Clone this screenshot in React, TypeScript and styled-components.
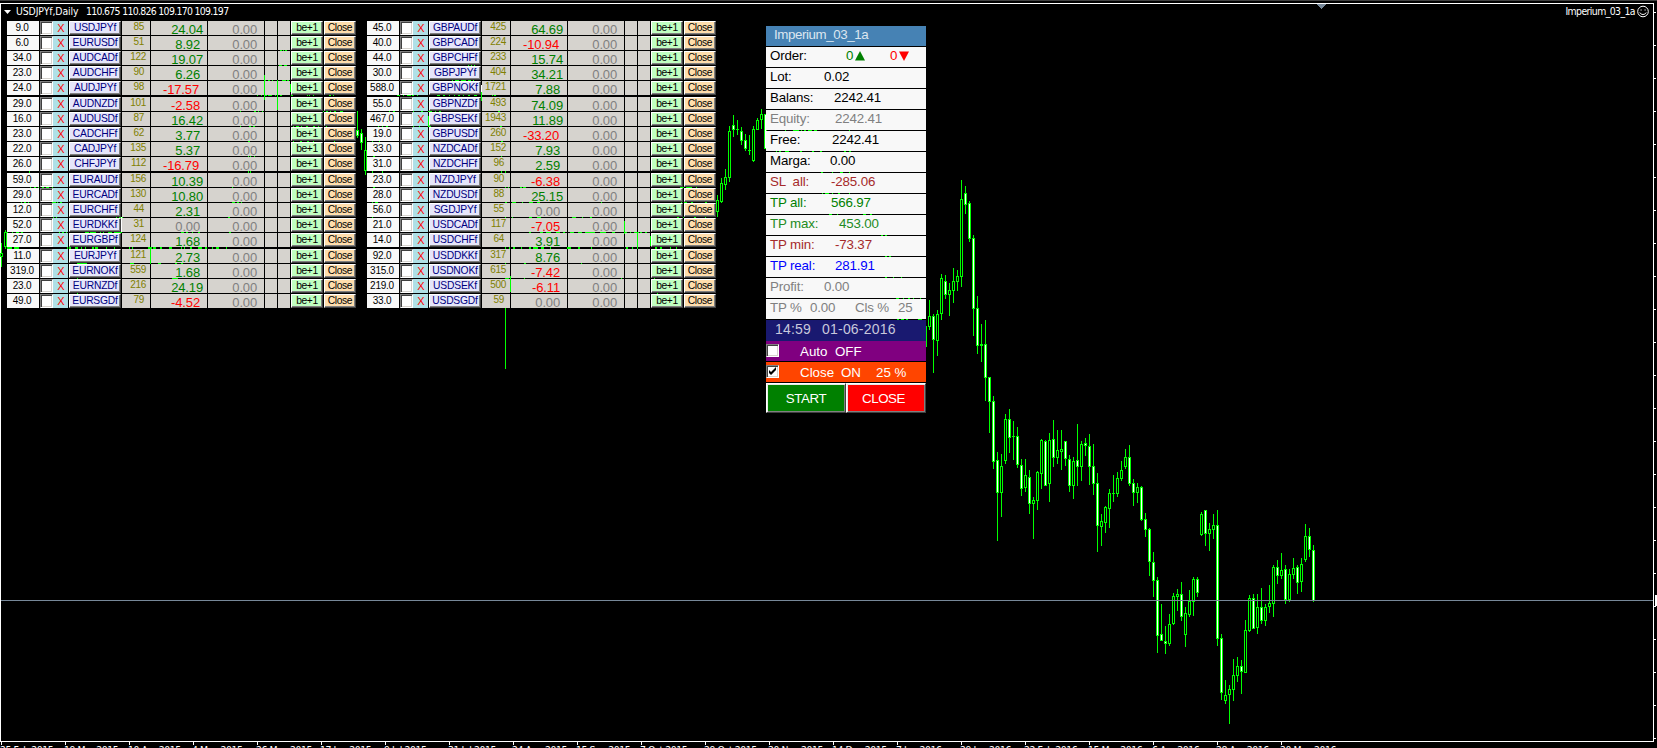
import React from "react";
import styled, { createGlobalStyle } from "styled-components";

const GlobalStyle = createGlobalStyle`
  html, body { margin: 0; padding: 0; background: #000; }
  body { overflow: hidden; }
`;

const LIME = "#00ff00";
const GRID = "#d6d3ce";

const Stage = styled.div`
  display: grid;
  width: 1657px;
  height: 748px;
  overflow: hidden;
  background: #000;
  font-family: "Liberation Sans", Arial, sans-serif;
  & > * { grid-area: 1 / 1; }
`;

const ChartSvg = styled.svg`
  display: block;
`;

const Overlay = styled.div`
  display: flex;
  flex-direction: column;
  min-width: 0;
`;

const Header = styled.header`
  box-sizing: border-box;
  display: flex;
  justify-content: space-between;
  height: 21px;
  padding: 3px 6px 2px 4px;
  color: #fff;
  font: condensed 10.4px/16px "DejaVu Sans", sans-serif;
  white-space: pre;
`;

const HeaderSide = styled.div`
  display: flex;
  align-items: center;
`;

const HeaderText = styled.span<{ $spacing: number; $width?: number }>`
  width: ${(p) => (p.$width ? `${p.$width}px` : "auto")};
  letter-spacing: ${(p) => p.$spacing}px;
`;

const Body = styled.main`
  display: flex;
  align-items: flex-start;
  height: 721px;
  padding-left: 7px;
`;

const PairTable = styled.div`
  width: 349px;
  margin-right: 11px;
`;

const PairRow = styled.div<{ $wide: boolean }>`
  display: grid;
  grid-template-columns: 32px 13px 14px 52px 28px 56px 56px 12px 12px 32px 32px;
  grid-template-rows: 14px;
  column-gap: 1px;
  height: 14px;
  margin-bottom: ${(p) => (p.$wide ? 2 : 1)}px;
  white-space: pre;
`;

const SpreadCell = styled.div`
  background: #f8f8f8;
  color: #000;
  font-size: 10px;
  line-height: 13px;
  letter-spacing: -0.25px;
  padding-right: 2px;
  text-align: center;
`;

const Check = styled.div`
  box-sizing: border-box;
  height: 14px;
  width: 13px;
  background: #fff;
  border: 1px solid;
  border-color: #808080 #fff #fff #808080;
  box-shadow: inset 1px 1px #404040, inset -1px -1px ${GRID};
  svg { display: block; }
`;

const RemoveCell = styled.div`
  background: #b0e0e6;
  margin-left: -1px;
  color: #ff0000;
  font-size: 11px;
  line-height: 15px;
  padding-left: 1px;
  text-align: center;
`;

const BevelButton = styled.button<{ $bg: string; $fg: string; $spacing?: number }>`
  appearance: none;
  box-sizing: border-box;
  display: block;
  width: 100%;
  height: 14px;
  margin: 0;
  padding: 0;
  border: 1px solid;
  border-color: #fff #404040 #404040 #fff;
  border-radius: 0;
  box-shadow: inset -1px -1px #808080;
  background: ${(p) => p.$bg};
  color: ${(p) => p.$fg};
  font: 10.3px/12px "Liberation Sans", Arial, sans-serif;
  letter-spacing: ${(p) => p.$spacing ?? -0.4}px;
  text-align: center;
  white-space: pre;
`;

const CountCell = styled.div<{ $right: number }>`
  background: ${GRID};
  color: #808000;
  font-size: 10px;
  line-height: 12px;
  letter-spacing: -0.3px;
  padding-right: ${(p) => p.$right}px;
  text-align: right;
`;

const ValueCell = styled.div<{ $color: string; $right: number }>`
  background: ${GRID};
  color: ${(p) => p.$color};
  padding-right: ${(p) => p.$right}px;
  font-size: 13px;
  line-height: 17px;
  letter-spacing: -0.15px;
  text-align: right;
`;

const BlankCell = styled.div`
  background: ${GRID};
`;

const Panel = styled.aside`
  width: 160px;
  margin: 5px 0 0 39px;
  font-size: 13.33px;
  white-space: pre;
`;

const PanelTitle = styled.div`
  height: 20px;
  margin-bottom: 1px;
  padding-left: 8px;
  background: #4682b4;
  color: #dce6f0;
  line-height: 18px;
  letter-spacing: -0.42px;
`;

const PanelRow = styled.div<{ $color: string }>`
  display: flex;
  height: 20px;
  margin-bottom: 1px;
  padding-left: 4px;
  background: #f8f8f8;
  color: ${(p) => p.$color};
  line-height: 18px;
  letter-spacing: -0.15px;
`;

const RowLabel = styled.span<{ $width: number }>`
  width: ${(p) => p.$width}px;
`;

const OrderCount = styled.span<{ $color: string; $width: number }>`
  display: flex;
  align-items: center;
  gap: 2px;
  height: 18px;
  width: ${(p) => p.$width}px;
  color: ${(p) => p.$color};
`;

const Clock = styled.div`
  display: flex;
  gap: 11px;
  height: 21px;
  padding-left: 9px;
  background: #191970;
  color: #c8c8dc;
  font-size: 14px;
  line-height: 19px;
  letter-spacing: 0.2px;
`;

const Toggle = styled.div<{ $bg: string }>`
  display: flex;
  height: 20px;
  margin-bottom: 1px;
  background: ${(p) => p.$bg};
  color: #fff;
  line-height: 21px;
  ${Check} { margin: 3px 21px 0 0; height: 13px; }
`;

const Actions = styled.div`
  display: grid;
  grid-template-columns: 80px 80px;
  ${BevelButton} {
    height: 30px;
    padding-top: 1px;
    font-size: 13.33px;
    line-height: 27px;
    box-shadow: inset 1px 1px #e8e8e8, inset -1px -1px #808080;
  }
  ${BevelButton}:last-child {
    padding-right: 5px;
  }
`;

const DateAxis = styled.footer`
  display: grid;
  grid-template-columns: repeat(21, 64px);
  height: 6px;
  color: #fff;
  font: condensed 10.4px/13px "DejaVu Sans", sans-serif;
  letter-spacing: -0.45px;
  white-space: pre;
  span { padding-top: 2px; }
`;

// [high, body top, body bottom, low, kind]: u = rising (hollow), d = falling (white)
type Candle = [number, number, number, number, "u" | "d"];

const segments: { start: number; candles: Candle[] }[] = [
  { start: 1, candles: [[243, 253, 257, 267, "u"], [230, 232, 247, 249, "u"]] },
  {
    start: 357,
    candles: [[111, 130, 136, 138, "d"], [129, 133, 143, 150, "d"], [137, 150, 171, 175, "u"]],
  },
  { start: 505, candles: [[308, 308, 308, 369, "u"]] },
  {
    start: 717,
    candles: [
      [195, 200, 212, 217, "u"], [178, 183, 202, 203, "u"], [169, 177, 185, 190, "u"],
      [126, 131, 178, 182, "u"], [115, 125, 130, 137, "d"], [120, 129, 130, 135, "u"],
      [127, 131, 141, 145, "d"], [134, 140, 149, 151, "d"], [135, 150, 151, 155, "u"],
      [126, 129, 161, 162, "u"], [118, 120, 130, 130, "u"], [109, 114, 120, 129, "u"],
      [114, 114, 149, 149, "d"],
    ],
  },
  {
    start: 925,
    candles: [
      [326, 326, 347, 347, "d"], [300, 316, 327, 330, "u"], [314, 316, 340, 373, "d"],
      [310, 314, 341, 356, "u"], [274, 278, 314, 320, "u"], [275, 281, 295, 299, "d"],
      [283, 290, 295, 316, "u"], [268, 281, 291, 303, "u"], [270, 276, 282, 291, "u"],
      [180, 199, 277, 287, "u"], [186, 193, 205, 214, "d"], [201, 203, 239, 242, "d"],
      [235, 238, 309, 336, "d"], [296, 308, 346, 354, "d"], [324, 344, 346, 362, "u"],
      [320, 344, 378, 401, "d"], [377, 377, 402, 433, "d"], [396, 401, 462, 469, "d"],
      [452, 460, 493, 541, "d"], [454, 466, 493, 517, "u"], [414, 419, 461, 464, "u"],
      [409, 419, 438, 453, "d"], [421, 436, 437, 460, "u"], [427, 436, 465, 468, "d"],
      [459, 465, 489, 496, "d"], [459, 475, 488, 492, "u"], [470, 477, 504, 514, "d"],
      [497, 500, 504, 539, "u"], [471, 472, 501, 510, "u"], [439, 440, 474, 489, "u"],
      [440, 441, 486, 486, "d"], [433, 440, 484, 502, "u"], [420, 439, 458, 467, "d"],
      [430, 450, 458, 464, "u"], [430, 449, 452, 470, "u"], [441, 441, 459, 466, "d"],
      [455, 459, 486, 492, "d"], [457, 461, 486, 499, "u"], [424, 460, 467, 486, "d"],
      [441, 444, 467, 481, "u"], [438, 443, 446, 456, "d"], [434, 446, 467, 485, "d"],
      [444, 466, 484, 495, "d"], [473, 483, 526, 552, "d"], [514, 521, 527, 546, "u"],
      [506, 507, 523, 533, "u"], [489, 493, 509, 528, "u"], [475, 493, 494, 502, "u"],
      [472, 478, 494, 497, "u"], [461, 470, 479, 481, "u"], [449, 457, 467, 469, "u"],
      [445, 457, 484, 486, "d"], [479, 483, 493, 506, "d"], [483, 487, 493, 503, "u"],
      [486, 487, 520, 521, "d"], [513, 519, 530, 537, "d"], [528, 529, 562, 576, "d"],
      [552, 562, 581, 597, "d"], [577, 580, 636, 653, "d"], [604, 634, 641, 641, "d"],
      [626, 641, 644, 654, "d"], [614, 624, 644, 646, "u"], [593, 596, 624, 625, "u"],
      [589, 594, 597, 611, "u"], [582, 594, 617, 621, "d"], [607, 613, 635, 647, "u"],
      [590, 601, 615, 617, "u"], [577, 579, 602, 616, "u"], [577, 579, 593, 597, "d"],
      [512, 514, 535, 536, "u"], [510, 510, 534, 546, "d"], [523, 529, 534, 551, "u"],
      [514, 525, 530, 539, "u"], [510, 525, 639, 646, "d"], [634, 638, 693, 700, "d"],
      [680, 695, 701, 704, "u"], [685, 689, 695, 724, "u"], [659, 675, 690, 701, "u"],
      [657, 666, 676, 682, "u"], [660, 666, 672, 694, "d"], [620, 630, 673, 673, "u"],
      [595, 598, 631, 632, "u"], [594, 598, 629, 629, "d"], [594, 607, 628, 634, "u"],
      [588, 607, 621, 624, "d"], [604, 607, 621, 626, "u"], [585, 603, 607, 613, "u"],
      [565, 567, 604, 617, "u"], [560, 567, 576, 584, "d"], [553, 570, 576, 579, "u"],
      [565, 569, 600, 604, "d"], [569, 574, 600, 602, "u"], [558, 568, 575, 579, "u"],
      [565, 567, 583, 594, "d"], [558, 564, 582, 592, "u"], [524, 536, 560, 562, "u"],
      [528, 536, 550, 557, "d"], [545, 550, 601, 602, "d"],
    ],
  },
];

// Price bars glimpsed through the thin seams between cells: y, height, [x, width] runs
const seams: [number, number, [number, number][]][] = [
  [50, 1, [[280, 2], [283, 1], [285, 2]]],
  [65, 1, [[279, 3], [284, 3], [468, 1], [471, 1], [474, 1]]],
  [80, 1, [[265, 1], [268, 2], [272, 1], [277, 1], [282, 4], [287, 2], [452, 1], [455, 4], [461, 5], [468, 3], [473, 1]]],
  [95, 1, [[257, 1], [261, 1], [265, 2], [268, 4], [275, 1], [277, 1], [280, 2], [291, 2], [307, 1], [309, 1], [313, 1], [329, 2], [333, 1], [397, 3], [403, 1], [407, 4], [412, 2], [417, 1], [437, 3], [443, 2], [449, 1], [454, 1], [458, 2], [463, 1], [468, 2], [474, 3], [492, 1], [494, 2]]],
  [111, 1, [[240, 1], [254, 2], [258, 1], [262, 1], [323, 1], [326, 2], [330, 1], [334, 2], [340, 3], [389, 1], [393, 2], [413, 1], [421, 2], [428, 4], [435, 1], [439, 2], [498, 2]]],
  [126, 1, [[240, 1], [249, 2], [253, 2], [293, 1], [296, 3], [301, 1], [306, 2], [313, 2], [318, 1], [326, 1], [378, 1], [382, 1], [386, 2], [413, 1], [419, 1], [428, 3], [500, 2]]],
  [141, 1, [[248, 2], [293, 1], [300, 2], [307, 2], [313, 1], [334, 1], [372, 1], [379, 1], [501, 2]]],
  [156, 1, [[248, 1], [250, 1], [254, 1], [373, 2], [501, 1]]],
  [171, 2, [[29, 1], [248, 1], [250, 1], [372, 1], [382, 1], [501, 1], [505, 1]]],
  [187, 1, [[30, 1], [34, 2], [38, 1], [42, 2], [46, 3], [52, 1], [232, 1], [373, 2], [505, 1], [508, 1], [520, 2], [523, 3], [680, 4], [686, 6], [696, 1]]],
  [202, 1, [[21, 1], [24, 2], [28, 1], [52, 4], [57, 1], [60, 2], [232, 3], [237, 2], [241, 1], [372, 1], [375, 3], [505, 2], [512, 4], [522, 1], [529, 4], [537, 3], [601, 1], [681, 1], [684, 3], [691, 2], [705, 2]]],
  [217, 1, [[53, 1], [56, 1], [116, 1], [119, 4], [228, 2], [372, 1], [505, 1], [512, 1], [529, 3], [537, 4], [572, 4], [582, 1], [590, 2], [677, 2], [683, 1], [694, 2], [705, 1]]],
  [232, 1, [[7, 1], [12, 1], [16, 3], [21, 2], [59, 1], [62, 2], [66, 1], [85, 4], [90, 6], [100, 1], [103, 1], [108, 4], [114, 8], [181, 3], [186, 2], [192, 1], [198, 2], [229, 2], [529, 2], [540, 3], [546, 5], [556, 4], [563, 2], [570, 4], [578, 4], [585, 10], [600, 6], [612, 3], [625, 2], [630, 1], [634, 5], [640, 2], [645, 2]]],
  [247, 2, [[7, 5], [14, 5], [67, 1], [69, 2], [75, 3], [81, 1], [85, 1], [92, 2], [95, 3], [106, 1], [114, 1], [129, 1], [132, 1], [148, 4], [153, 3], [160, 2], [169, 3], [181, 1], [184, 1], [190, 2], [198, 4], [205, 2], [212, 1], [216, 3], [226, 1], [505, 1], [509, 1], [513, 2], [521, 1], [529, 2], [533, 5], [541, 3], [550, 1], [567, 4], [578, 2], [591, 1], [626, 2], [632, 1], [637, 1], [655, 2], [660, 2], [670, 1], [676, 1]]],
  [263, 1, [[77, 10], [130, 4], [158, 3], [175, 2], [181, 2], [505, 1], [524, 2], [581, 1]]],
  [278, 1, [[77, 1], [172, 6], [505, 4], [510, 1], [524, 1], [621, 1], [654, 1]]],
  [293, 1, [[77, 1], [657, 1]]],
  [130, 1, [[785, 1], [793, 6], [801, 1], [804, 2], [808, 4], [814, 3], [849, 1]]],
  [151, 1, [[776, 1], [779, 2], [785, 4], [800, 2], [812, 2], [820, 2], [844, 2], [849, 2]]],
  [172, 1, [[821, 2], [832, 1], [840, 3], [849, 1]]],
  [193, 1, [[822, 1], [825, 4], [832, 1], [838, 2], [849, 1]]],
  [214, 1, [[829, 3], [837, 1], [863, 3], [870, 2]]],
  [235, 1, [[881, 2], [885, 2]]],
  [256, 1, [[885, 2], [889, 2]]],
  [277, 1, [[885, 2], [893, 1], [901, 1]]],
  [298, 1, [[896, 3], [903, 1], [908, 2], [913, 1], [920, 1]]],
  [319, 1, [[897, 2], [901, 3], [906, 2], [918, 4]]],
];

// [x, top, bottom, colour]
const seamBars: [number, number, number, string][] = [
  [264, 75, 100, LIME], [277, 80, 110, LIME], [290, 84, 92, LIME], [150, 248, 264, LIME],
  [121, 217, 232, "#fff"], [624, 221, 234, LIME], [637, 232, 249, LIME], [650, 236, 246, LIME],
  [510, 276, 292, LIME], [481, 85, 92, "#fff"], [481, 92, 101, LIME], [428, 116, 127, LIME],
];

const CandleMark = ({ x, c }: { x: number; c: Candle }) => {
  const [high, top, bottom, low, kind] = c;
  return (
    <g>
      <rect x={x} y={high} width={1} height={Math.max(1, low - high)} fill={LIME} />
      {bottom > top && <rect x={x - 1} y={top} width={3} height={bottom - top} fill={LIME} />}
      {bottom - top > 2 && (
        <rect x={x} y={top + 1} width={1} height={bottom - top - 2} fill={kind === "u" ? "#000" : "#fff"} />
      )}
    </g>
  );
};

const Chart = () => (
  <ChartSvg width={1657} height={748} shapeRendering="crispEdges">
    <rect x={0} y={0} width={1657} height={1} fill="#404040" />
    <rect x={0} y={3} width={1654} height={1} fill="#fff" />
    <rect x={0} y={3} width={1} height={739} fill="#fff" />
    <rect x={1653} y={3} width={1} height={739} fill="#fff" />
    <rect x={0} y={741} width={1654} height={1} fill="#fff" />
    {Array.from({ length: 23 }, (_, i) => (
      <rect key={i} x={1654} y={12 + i * 33} width={2} height={1} fill="#fff" />
    ))}
    {Array.from({ length: 21 }, (_, i) => (
      <rect key={i} x={1 + i * 64} y={742} width={1} height={3} fill="#fff" />
    ))}
    <path d="M1317 4h9l-4.5 5z" fill="#778899" />
    {segments.map((s) =>
      s.candles.map((c, i) => <CandleMark key={s.start + i * 4} x={s.start + i * 4} c={c} />),
    )}
    {seams.map(([y, h, runs]) =>
      runs.map(([x, w]) => <rect key={`${y}-${x}`} x={x} y={y} width={w} height={h} fill={LIME} />),
    )}
    {seamBars.map(([x, top, bottom, fill]) => (
      <rect key={`${x}-${top}`} x={x} y={top} width={1} height={bottom - top} fill={fill} />
    ))}
    <rect x={1} y={600} width={1652} height={1} fill="#778899" />
    <rect x={1655} y={595} width={2} height={11} fill="#fff" />
  </ChartSvg>
);

// spread, symbol, count, result
type Pair = [string, string, number, string];

const leftPairs: Pair[] = [
  ["9.0", "USDJPYf", 85, "24.04"], ["6.0", "EURUSDf", 51, "8.92"], ["34.0", "AUDCADf", 122, "19.07"],
  ["23.0", "AUDCHFf", 90, "6.26"], ["24.0", "AUDJPYf", 98, "-17.57"], ["29.0", "AUDNZDf", 101, "-2.58"],
  ["16.0", "AUDUSDf", 87, "16.42"], ["23.0", "CADCHFf", 62, "3.77"], ["22.0", "CADJPYf", 135, "5.37"],
  ["26.0", "CHFJPYf", 112, "-16.79"], ["59.0", "EURAUDf", 156, "10.39"], ["29.0", "EURCADf", 130, "10.80"],
  ["12.0", "EURCHFf", 44, "2.31"], ["52.0", "EURDKKf", 31, "0.00"], ["27.0", "EURGBPf", 124, "1.68"],
  ["11.0", "EURJPYf", 121, "2.73"], ["319.0", "EURNOKf", 559, "1.68"], ["23.0", "EURNZDf", 216, "24.19"],
  ["49.0", "EURSGDf", 79, "-4.52"],
];

const rightPairs: Pair[] = [
  ["45.0", "GBPAUDf", 425, "64.69"], ["40.0", "GBPCADf", 224, "-10.94"], ["44.0", "GBPCHFf", 233, "15.74"],
  ["30.0", "GBPJPYf", 404, "34.21"], ["588.0", "GBPNOKf", 1721, "7.88"], ["55.0", "GBPNZDf", 493, "74.09"],
  ["467.0", "GBPSEKf", 1943, "11.89"], ["19.0", "GBPUSDf", 260, "-33.20"], ["33.0", "NZDCADf", 152, "7.93"],
  ["31.0", "NZDCHFf", 96, "2.59"], ["23.0", "NZDJPYf", 90, "-6.38"], ["28.0", "NZDUSDf", 88, "25.15"],
  ["56.0", "SGDJPYf", 55, "0.00"], ["21.0", "USDCADf", 117, "-7.05"], ["14.0", "USDCHFf", 64, "3.91"],
  ["92.0", "USDDKKf", 317, "8.76"], ["315.0", "USDNOKf", 615, "-7.42"], ["219.0", "USDSEKf", 500, "-6.11"],
  ["33.0", "USDSGDf", 59, "0.00"],
];

const resultColor = (v: string) => (v.startsWith("-") ? "#ff0000" : v === "0.00" ? "#808080" : "#008000");
const resultInset = (v: string) => (v.startsWith("-") && v.length === 6 ? 8 : v.length === 5 && v[0] !== "-" ? 4 : 7);

const Pairs = ({ pairs }: { pairs: Pair[] }) => (
  <PairTable>
    {pairs.map(([spread, symbol, count, result], i) => (
      <PairRow key={symbol} $wide={i % 5 === 4}>
        <SpreadCell>{spread}</SpreadCell>
        <Check />
        <RemoveCell>X</RemoveCell>
        <BevelButton $bg="#e6e6fa" $fg="#000080" $spacing={-0.2}>{symbol}</BevelButton>
        <CountCell $right={count > 99 ? 4 : 6}>{count}</CountCell>
        <ValueCell $color={resultColor(result)} $right={resultInset(result)}>{result}</ValueCell>
        <ValueCell $color="#808080" $right={7}>0.00</ValueCell>
        <BlankCell />
        <BlankCell />
        <BevelButton $bg="#c1ffc1" $fg="#000">be+1</BevelButton>
        <BevelButton $bg="#ffdead" $fg="#000">Close</BevelButton>
      </PairRow>
    ))}
  </PairTable>
);

const stats: [string, string, string, number][] = [
  ["Lot:", "0.02", "#000", 54], ["Balans:", "2242.41", "#000", 64], ["Equity:", "2242.41", "#808080", 65],
  ["Free:", "2242.41", "#000", 62], ["Marga:", "0.00", "#000", 60], ["SL  all:", "-285.06", "#a52a2a", 61],
  ["TP all:", "566.97", "#008000", 61], ["TP max:", "453.00", "#228b22", 69], ["TP min:", "-73.37", "#a52a2a", 65],
  ["TP real:", "281.91", "#0000ff", 65], ["Profit:", "0.00", "#808080", 54],
];

const dates = [
  "25 Feb 2015", "19 Mar 2015", "10 Apr 2015", "4 May 2015", "26 May 2015", "17 Jun 2015", "9 Jul 2015",
  "31 Jul 2015", "24 Aug 2015", "15 Sep 2015", "7 Oct 2015", "29 Oct 2015", "20 Nov 2015", "14 Dec 2015",
  "7 Jan 2016", "29 Jan 2016", "22 Feb 2016", "15 Mar 2016", "6 Apr 2016", "28 Apr 2016", "20 May 2016",
];

export default function App() {
  return (
    <>
      <GlobalStyle />
      <Stage>
        <Chart />
        <Overlay>
          <Header>
            <HeaderSide>
              <svg width="12" height="16"><path d="M0 7h7l-3.5 4z" fill="#fff" /></svg>
              <HeaderText $spacing={-0.1} $width={70}>USDJPYf,Daily</HeaderText>
              <HeaderText $spacing={-0.68}>110.675 110.826 109.170 109.197</HeaderText>
            </HeaderSide>
            <HeaderSide>
              <HeaderText $spacing={-0.6}>Imperium_03_1a</HeaderText>
              <svg width="16" height="13" viewBox="-2 0 16 13" fill="none" stroke="#fff">
                <circle cx="6" cy="6.5" r="5.3" />
                <path d="M2.8 7.5c1 2.6 5.4 2.6 6.4 0M3.5 5h1.2M7.5 5h1.2" />
              </svg>
            </HeaderSide>
          </Header>
          <Body>
            <Pairs pairs={leftPairs} />
            <Pairs pairs={rightPairs} />
            <Panel>
              <PanelTitle>Imperium_03_1a</PanelTitle>
              <PanelRow $color="#000">
                <RowLabel $width={76}>Order:</RowLabel>
                <OrderCount $color="#008000" $width={44}>
                  0<svg width="10" height="10"><path d="M0 9.5h10L5 0z" fill="#008000" /></svg>
                </OrderCount>
                <OrderCount $color="#ff0000" $width={30}>
                  0<svg width="10" height="10"><path d="M0 .5h10L5 10z" fill="#f00" /></svg>
                </OrderCount>
              </PanelRow>
              {stats.map(([label, value, color, width]) => (
                <PanelRow key={label} $color={color}>
                  <RowLabel $width={width}>{label}</RowLabel>
                  {value}
                </PanelRow>
              ))}
              <PanelRow $color="#808080">
                <RowLabel $width={40}>TP %</RowLabel>
                <RowLabel $width={45}>0.00</RowLabel>
                <RowLabel $width={43}>Cls %</RowLabel>25
              </PanelRow>
              <Clock><span>14:59</span><span>01-06-2016</span></Clock>
              <Toggle $bg="#800080">
                <Check />
                <RowLabel $width={35}>Auto</RowLabel>OFF
              </Toggle>
              <Toggle $bg="#ff4500">
                <Check>
                  <svg width="11" height="11"><path d="M2 4v3l2 2 5-5V1L4 6z" fill="#000" /></svg>
                </Check>
                <RowLabel $width={41}>Close</RowLabel>
                <RowLabel $width={35}>ON</RowLabel>25 %
              </Toggle>
              <Actions>
                <BevelButton $bg="#008000" $fg="#fff">START</BevelButton>
                <BevelButton $bg="#ff0000" $fg="#fff">CLOSE</BevelButton>
              </Actions>
            </Panel>
          </Body>
          <DateAxis>{dates.map((d) => <span key={d}>{d}</span>)}</DateAxis>
        </Overlay>
      </Stage>
    </>
  );
}
